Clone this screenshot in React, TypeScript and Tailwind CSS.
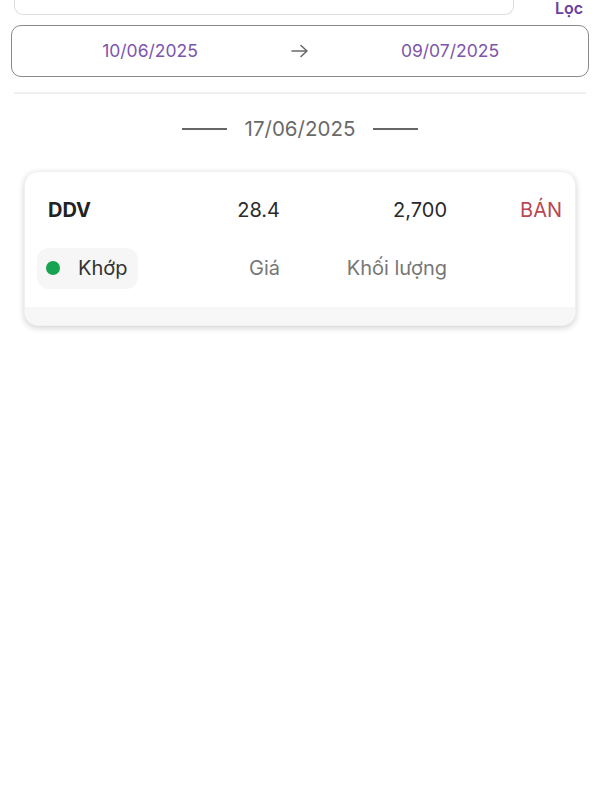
import React from "react";

const font = { fontFamily: "Inter, 'Noto Sans', sans-serif" };

export default function App() {
  return (
    <div className="w-[600px] h-[800px] bg-white overflow-hidden" style={font}>
      {/* search (scrolled, only its bottom edge shows) + Lọc */}
      <div className="flex items-start pl-[14px] pr-[17px] h-[15px]">
        <div className="w-[500px] h-[15px] border-x-[1.5px] border-b-[1.5px] border-[#dcdcdc] rounded-b-[9px]" />
        <div className="flex-1 flex justify-end text-[16px] font-semibold text-[#6a3fa3] leading-[16px]">
          Lọc
        </div>
      </div>

      {/* date range */}
      <div className="mx-[11px] mt-[10px] h-[52px] border-[1.5px] border-[#8a8a8a] rounded-[10px] flex items-center">
        <div className="w-[276px] text-center text-[17.5px] text-[#7d55ad]">10/06/2025</div>
        <div className="w-[24px] flex justify-center text-[#6a6a6a]">
          <svg width="20" height="16" viewBox="0 0 20 16" fill="none" stroke="currentColor" strokeWidth="1.6" strokeLinecap="round" strokeLinejoin="round">
            <path d="M2 8h15M11 2.5 17 8l-6 5.5" />
          </svg>
        </div>
        <div className="w-[276px] text-center text-[17.5px] text-[#7d55ad]">09/07/2025</div>
      </div>

      <div className="mx-[14px] mt-[15px] h-[2px] bg-[#f0f0f0]" />

      {/* day header */}
      <div className="mt-[20px] flex items-center justify-center gap-[18px]">
        <div className="w-[45px] h-[2px] bg-[#666]" />
        <div className="text-[20.5px] text-[#6a6a6a]">17/06/2025</div>
        <div className="w-[45px] h-[2px] bg-[#666]" />
      </div>

      {/* order card */}
      <div className="mx-[24px] mt-[26px] rounded-[14px] bg-white shadow-[0_2px_6px_rgba(0,0,0,0.18)] overflow-hidden border border-[#f0f0f0]">
        <div className="pl-[12px] pr-[15px] pt-[23px]">
          <div className="grid grid-cols-[164px_79px_167px_115px] items-center h-[28px] text-[20px]">
            <div className="pl-[11px] font-bold text-[#222]">DDV</div>
            <div className="text-right text-[#2a2a2a]">28.4</div>
            <div className="text-right text-[#2a2a2a]">2,700</div>
            <div className="text-right text-[#b84753]">BÁN</div>
          </div>
          <div className="grid grid-cols-[164px_79px_167px_115px] items-center mt-[25px] mb-[18px] text-[20px]">
            <div>
              <div className="inline-flex items-center h-[41px] pl-[9px] pr-[11px] rounded-[12px] bg-[#f6f6f6]">
                <span className="w-[14px] h-[14px] rounded-full bg-[#16a452]" />
                <span className="ml-[18px] text-[#333]">Khớp</span>
              </div>
            </div>
            <div className="text-right text-[#777]">Giá</div>
            <div className="text-right text-[#777]">Khối lượng</div>
            <div />
          </div>
        </div>
        <div className="h-[18px] bg-[#f7f7f7]" />
      </div>
    </div>
  );
}
